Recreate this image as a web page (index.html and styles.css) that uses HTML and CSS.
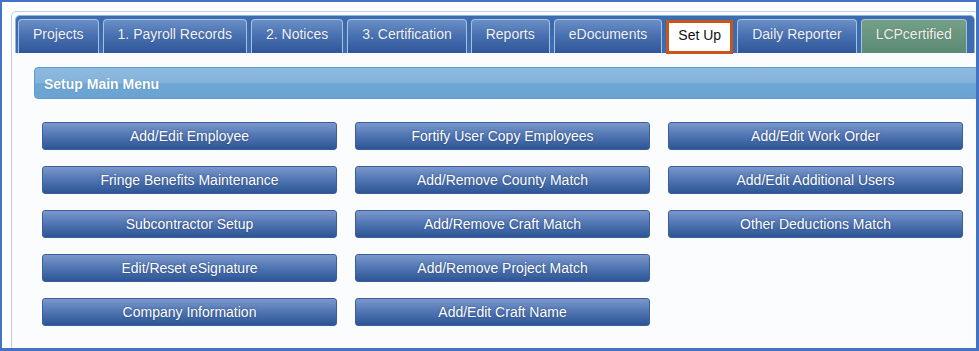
FILE: index.html
```html
<html>
<head>
    <link rel="stylesheet" href="styles.css">
</head>
<body>
    <div class="frame">
        <div class="panel">
            <ul class="tabs">
                <li class="tab">Projects</li>
                <li class="tab">1. Payroll Records</li>
                <li class="tab">2. Notices</li>
                <li class="tab">3. Certification</li>
                <li class="tab">Reports</li>
                <li class="tab">eDocuments</li>
                <li class="tab active">Set Up</li>
                <li class="tab">Daily Reporter</li>
                <li class="tab certified">LCPcertified</li>
            </ul>
            <div class="section">
                <div class="section-head">Setup Main Menu</div>
                <div class="menu-grid">
                    <button class="menu-btn">Add/Edit Employee</button>
                    <button class="menu-btn">Fringe Benefits Maintenance</button>
                    <button class="menu-btn">Subcontractor Setup</button>
                    <button class="menu-btn">Edit/Reset eSignature</button>
                    <button class="menu-btn">Company Information</button>
                    <button class="menu-btn">Fortify User Copy Employees</button>
                    <button class="menu-btn">Add/Remove County Match</button>
                    <button class="menu-btn">Add/Remove Craft Match</button>
                    <button class="menu-btn">Add/Remove Project Match</button>
                    <button class="menu-btn">Add/Edit Craft Name</button>
                    <button class="menu-btn">Add/Edit Work Order</button>
                    <button class="menu-btn">Add/Edit Additional Users</button>
                    <button class="menu-btn">Other Deductions Match</button>
                </div>
            </div>
        </div>
    </div>
</body>
</html>
```

FILE: styles.css
```css
* {
    margin: 0;
    padding: 0;
    box-sizing: border-box;
}
body {
    background-color: #ffffff;
    font-family: "Liberation Sans", Arial, sans-serif;
}
.frame {
    width: 979px;
    height: 351px;
    border-style: solid;
    border-color: #4472c4;
    border-width: 2px 3px 3px 2px;
    padding: 9px 0 0 9px;
    overflow: hidden;
    background: #ffffff;
}
.panel {
    width: 968px;
    height: 360px;
    border: 1px solid #b6d0ea;
    border-radius: 5px;
    padding: 3px;
    background: #fafcfd;
}
.tabs {
    list-style: none;
    display: flex;
    gap: 4px;
    height: 38px;
    padding: 3px 2px 0;
    background: #3d6cae;
    border: 1px solid #93b5dc;
    border-bottom: none;
    border-radius: 5px 5px 0 0;
}
.tab {
    height: 34px;
    line-height: 29px;
    padding: 0 14px;
    font-size: 14px;
    color: #f2f4f8;
    text-shadow: 0 0 1px rgba(20, 45, 90, 0.5);
    background: linear-gradient(#6a8fc6, #4a72b2 45%, #2e5699);
    border: 1px solid #a7c1e2;
    border-bottom: none;
    border-radius: 4px 4px 0 0;
    white-space: nowrap;
}
.tab.active {
    margin: 1px 0 -1px;
    padding: 0 9px;
    line-height: 25px;
    color: #111111;
    text-shadow: none;
    background: #ffffff;
    border: 3px solid #c8561c;
    border-radius: 0;
}
.tab.certified {
    color: #f4f4e8;
    background: linear-gradient(#73a087, #5c8a72);
}
.section {
    padding: 14px 0 0 19px;
    margin-right: -4px;
}
.section-head {
    height: 32px;
    line-height: 32px;
    padding-left: 9px;
    font-size: 14px;
    font-weight: bold;
    color: #ffffff;
    text-shadow: 0 0 1px rgba(40, 80, 130, 0.5);
    background: linear-gradient(#8dbade, #84b3db 50%, #6ea6d5 52%, #6aa3d3);
    border: 1px solid #5d9bd2;
    border-radius: 4px;
}
.menu-grid {
    display: grid;
    grid-template-columns: repeat(3, 295px);
    grid-template-rows: repeat(5, 28px);
    grid-auto-flow: column;
    column-gap: 18px;
    row-gap: 16px;
    margin: 23px 0 0 8px;
}
.menu-btn {
    font-family: "Liberation Sans", Arial, sans-serif;
    font-size: 14px;
    color: #ffffff;
    text-shadow: 0 0 2px rgba(20, 45, 90, 0.7);
    background: linear-gradient(#7b98cb, #5378b5 45%, #2d5595);
    border: 1px solid #3a5f9c;
    border-radius: 3px;
}
```
